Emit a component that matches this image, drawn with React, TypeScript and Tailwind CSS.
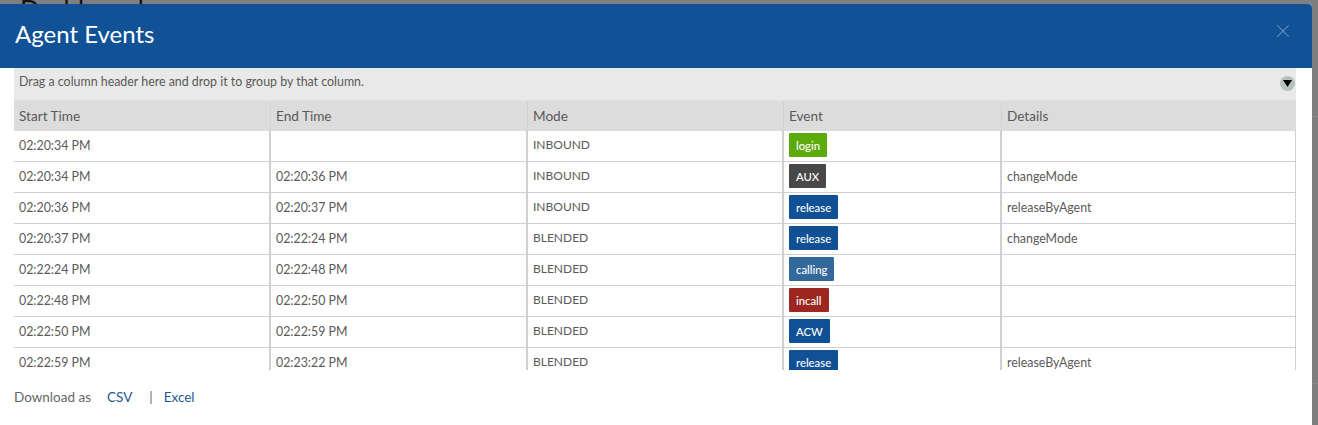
import React from 'react';
import { X } from 'lucide-react';

const rows = [
  { start: '02:20:34 PM', end: '', mode: 'INBOUND', event: 'login', color: 'bg-[#5cab0b]', details: '' },
  { start: '02:20:34 PM', end: '02:20:36 PM', mode: 'INBOUND', event: 'AUX', color: 'bg-[#484848]', details: 'changeMode' },
  { start: '02:20:36 PM', end: '02:20:37 PM', mode: 'INBOUND', event: 'release', color: 'bg-[#105195]', details: 'releaseByAgent' },
  { start: '02:20:37 PM', end: '02:22:24 PM', mode: 'BLENDED', event: 'release', color: 'bg-[#105195]', details: 'changeMode' },
  { start: '02:22:24 PM', end: '02:22:48 PM', mode: 'BLENDED', event: 'calling', color: 'bg-[#33689b]', details: '' },
  { start: '02:22:48 PM', end: '02:22:50 PM', mode: 'BLENDED', event: 'incall', color: 'bg-[#9c2620]', details: '' },
  { start: '02:22:50 PM', end: '02:22:59 PM', mode: 'BLENDED', event: 'ACW', color: 'bg-[#105195]', details: '' },
  { start: '02:22:59 PM', end: '02:23:22 PM', mode: 'BLENDED', event: 'release', color: 'bg-[#105195]', details: 'releaseByAgent' },
];

const columns = 'grid grid-cols-[257px_257px_256px_218px_295px]';
const headers = ['Start Time', 'End Time', 'Mode', 'Event', 'Details'];

const App = () => {
  return (
    <div className="relative h-[425px] w-[1318px] overflow-hidden bg-[#7f7f7f] font-['Lato',sans-serif] text-[12.4px] text-[#5a5a5a]">
      {/* page behind the modal, only its top edge shows */}
      <div className="h-[4px] overflow-hidden pl-[20px]">
        <div className="-mt-[6px] text-[26px] leading-[32px] text-[#111]">Dashboard</div>
      </div>
      <div className="absolute left-[1312px] top-[116px] h-px w-[6px] bg-[#8a8a8a]" />
      <div className="absolute left-[1312px] top-[383px] h-px w-[6px] bg-[#8a8a8a]" />

      <div className="relative h-[421px] w-[1312px] rounded-tr-[4px] bg-white">
        <header className="flex h-[64px] items-start justify-between rounded-tr-[4px] bg-[#105295] pl-[15px] pr-[18px]">
          <h1 className="mt-[15px] text-[24px] leading-[30px] text-white">Agent Events</h1>
          <X size={22} strokeWidth={1.1} className="mt-[16px] text-[#6f9ac5]" />
        </header>

        <div className="ml-[14px] w-[1282px]">
          <div className="flex h-[33px] items-start justify-between border-b border-[#dfdfdf] bg-[#e9e9e9] pl-[5px] pr-[1px]">
            <span className="mt-[6px] leading-[16px]">Drag a column header here and drop it to group by that column.</span>
            <span className="mt-[8px] flex h-[15px] w-[15px] items-center justify-center rounded-full bg-[#b7c1bc]">
              <svg width="9" height="7" viewBox="0 0 9 7"><path d="M0 0h9L4.5 7z" fill="#000" /></svg>
            </span>
          </div>

          <div className="h-[269px] overflow-hidden">
            <div className={`${columns} h-[30px] bg-[#dcdcdc] text-[13.6px]`}>
              {headers.map((h) => (
                <div key={h} className="flex items-center border-r border-[#d2d2d2] pl-[5px] last:border-r-0">{h}</div>
              ))}
            </div>
            {rows.map((row, i) => (
              <div key={i} className={`${columns} h-[31px] border-b border-[#d0d0d0]`}>
                <div className="border-r-2 border-[#d0d0d0] pl-[5px] pt-[7px] leading-[15px]">{row.start}</div>
                <div className="border-r-2 border-[#d0d0d0] pl-[5px] pt-[7px] leading-[15px]">{row.end}</div>
                <div className="border-r-2 border-[#d0d0d0] pl-[5px] pt-[6px] text-[12px] leading-[15px]">{row.mode}</div>
                <div className="border-r-2 border-[#d0d0d0] pl-[5px] pt-[2px]">
                  <span className={`inline-block h-[24px] rounded-[1px] px-[7px] text-[11.3px] font-medium leading-[25px] text-white ${row.color}`}>{row.event}</span>
                </div>
                <div className="border-r-2 border-[#d0d0d0] pl-[5px] pt-[7px] leading-[15px]">{row.details}</div>
              </div>
            ))}
          </div>

          <div className="flex items-center pt-[19px] text-[13.5px] leading-[16px]">
            <span className="text-[#666]">Download as</span>
            <a className="ml-[16px] text-[#1c5a96]">CSV</a>
            <span className="ml-[17px] text-[#666]">|</span>
            <a className="ml-[11px] text-[#1c5a96]">Excel</a>
          </div>
        </div>
      </div>
    </div>
  );
};

export default App;
